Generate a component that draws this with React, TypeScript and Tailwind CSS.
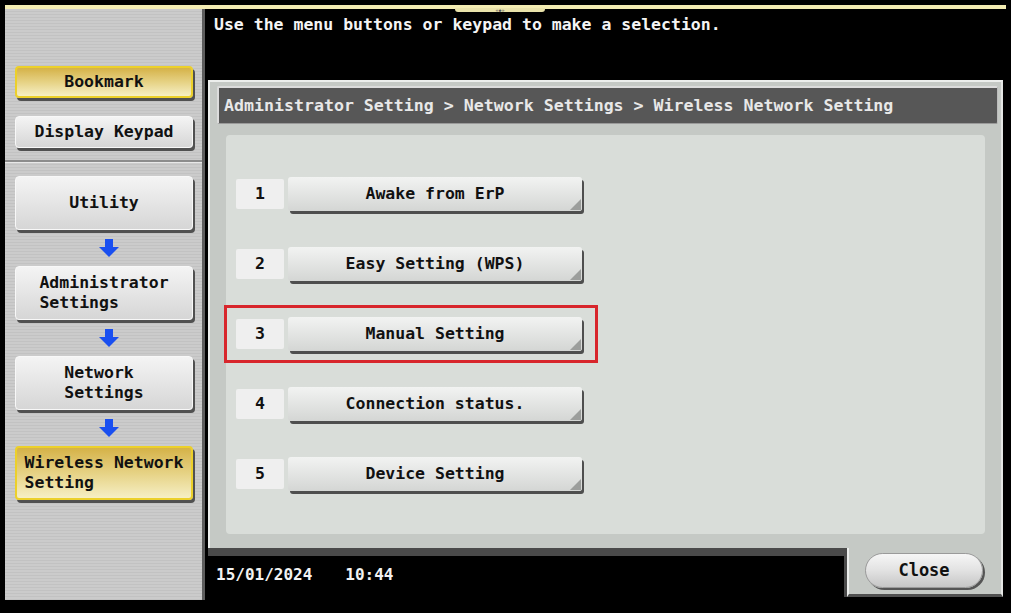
import React from "react";

const FONT = { fontFamily: '"DejaVu Sans Mono", "Liberation Mono", monospace' };

function Arrow() {
  return (
    <div className="flex h-[36px] items-center justify-center">
      <svg width="20" height="18" viewBox="0 0 20 18">
        <rect x="6" y="0" width="8" height="9" fill="#1a4ff0" />
        <polygon points="0,8 20,8 10,18" fill="#1a4ff0" />
      </svg>
    </div>
  );
}

function SideButton({
  children,
  yellow,
  h,
}: {
  children: React.ReactNode;
  yellow?: boolean;
  h: string;
}) {
  const base = yellow
    ? "bg-gradient-to-b from-[#d5b246] via-[#e6d284] to-[#f6efc4] border-2 border-[#ecd02a]"
    : "bg-gradient-to-b from-[#f4f4f4] to-[#d6d6d6] border border-[#f8f8f8]";
  return (
    <div
      className={`${base} ${h} w-[178px] rounded-[4px] shadow-[2px_3px_0_#505050] flex items-center justify-center text-[16.5px] leading-[20px] font-bold text-[#111]`}
    >
      <span className="inline-block text-left">{children}</span>
    </div>
  );
}

function MenuRow({ n, label }: { n: number; label: string }) {
  return (
    <div className="flex items-start gap-[4px] h-[36px]">
      <div className="mt-[2px] w-[48px] h-[30px] bg-[#efefef] rounded-[2px] flex items-center justify-center text-[16.5px] font-bold text-[#111]">
        {n}
      </div>
      <div className="relative w-[294px] h-[34px] pt-[1px] rounded-[3px] bg-gradient-to-b from-[#f2f3f2] to-[#d4d6d4] shadow-[2px_3px_0_#4e4e4e] flex items-center justify-center text-[16.5px] font-bold text-[#111]">
        {label}
        <svg
          className="absolute right-[1px] bottom-[1px]"
          width="11"
          height="11"
          viewBox="0 0 11 11"
        >
          <polygon points="11,0 11,11 0,11" fill="#9c9e9c" />
        </svg>
      </div>
    </div>
  );
}

export default function App() {
  return (
    <div
      className="relative w-[1011px] h-[613px] bg-black overflow-hidden"
      style={FONT}
    >
      <div className="pt-[5px] px-[5px]">
        <div className="relative h-[4px] bg-[#f3ecb2]">
          <div className="absolute left-[450px] top-[3px] w-[90px] h-[4px] bg-[#e9e2aa] rounded-b-[3px] flex items-center justify-center text-[5px] leading-[4px] text-[#555]">
            «◆»
          </div>
        </div>
      </div>

      <div className="flex h-[591px] px-[5px]">
        {/* Left panel */}
        <aside className="w-[200px] h-full border-r-[3px] border-[#5e5e5e] bg-[repeating-linear-gradient(to_bottom,#cbcbcb_0px,#cbcbcb_2px,#c2c2c2_2px,#c2c2c2_3px)] flex flex-col">
          <div className="pl-[10px] pt-[57px]">
            <SideButton yellow h="h-[32px]">
              Bookmark
            </SideButton>
            <div className="mt-[18px]">
              <SideButton h="h-[32px]">Display Keypad</SideButton>
            </div>
          </div>
          <div className="mt-[12px] h-[2px] bg-[#8c8c8c]" />
          <div className="h-[1px] bg-[#e8e8e8]" />
          <div className="pl-[10px] pt-[13px]">
            <SideButton h="h-[54px]">Utility</SideButton>
            <Arrow />
            <SideButton h="h-[54px]">
              Administrator
              <br />
              Settings
            </SideButton>
            <Arrow />
            <SideButton h="h-[54px]">
              Network
              <br />
              Settings
            </SideButton>
            <Arrow />
            <SideButton yellow h="h-[54px]">
              Wireless Network
              <br />
              Setting
            </SideButton>
          </div>
        </aside>

        {/* Main area */}
        <main className="flex-1 flex flex-col">
          <div className="h-[71px] pl-[9px] pt-[6px] text-[16.5px] leading-[20px] font-bold text-[#f4f4f4]">
            Use the menu buttons or keypad to make a selection.
          </div>

          <div className="h-[468px] mx-[3px] bg-[#c5c9c5] border-t-2 border-l-2 border-r-2 border-t-[#eceeec] border-l-[#eceeec] border-r-[#e4e6e4] flex flex-col">
            <div className="mt-[4px] ml-[7px] mr-[3px] h-[38px] bg-[#575757] border-t-2 border-l-2 border-r border-b border-t-[#dcdcdc] border-l-[#dcdcdc] border-r-[#bcbcbc] border-b-[#9a9a9a] flex items-center pl-[5px] pt-[1px] text-[16.6px] font-bold text-[#e8e8e8] rounded-[2px]">
              Administrator Setting &gt; Network Settings &gt; Wireless Network Setting
            </div>
            <div className="mt-[11px] mx-[16px] h-[399px] bg-[#d9ddd9] rounded-[4px] pt-[42px] pl-[10px] flex flex-col gap-[34px]">
              <MenuRow n={1} label="Awake from ErP" />
              <MenuRow n={2} label="Easy Setting (WPS)" />
              <MenuRow n={3} label="Manual Setting" />
              <MenuRow n={4} label="Connection status." />
              <MenuRow n={5} label="Device Setting" />
            </div>
          </div>

          <div className="h-[52px] flex">
            <div className="flex-1 ml-[3px] border-t-[8px] border-[#4a4a4a] pl-[8px] pt-[9px] text-[16px] leading-[20px] font-bold text-[#f2f2f2]">
              <span>15/01/2024</span>
              <span className="ml-[33px]">10:44</span>
            </div>
            <div className="w-[156px] mr-[3px] h-[49px] bg-[#c5c9c5] border-l-2 border-r-2 border-b-[3px] border-l-[#eceeec] border-r-[#e4e6e4] border-b-[#505050] shadow-[-3px_0_0_#4a4a4a] pt-[5px] pl-[16px]">
              <div className="w-[118px] h-[35px] rounded-full bg-gradient-to-b from-[#f6f6f6] via-[#e2e2e2] to-[#c6c6c6] border border-[#9a9a9a] shadow-[2px_2px_0_#555] flex items-center justify-center text-[17px] font-bold text-[#111]">
                Close
              </div>
            </div>
          </div>
        </main>
      </div>

      {/* Annotation highlight */}
      <div className="absolute left-[224px] top-[305px] w-[374px] h-[58px] border-[3px] border-[#d8262c]" />
    </div>
  );
}
